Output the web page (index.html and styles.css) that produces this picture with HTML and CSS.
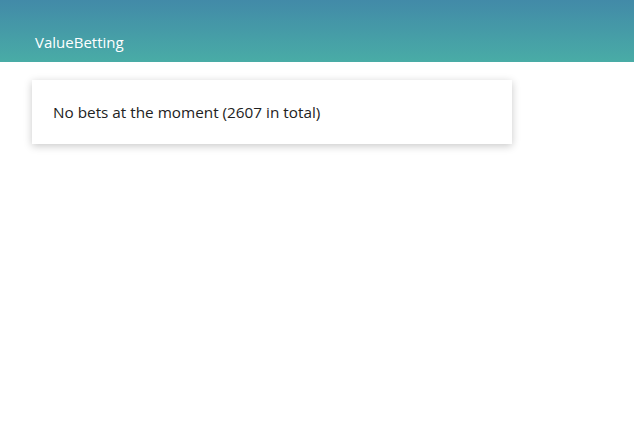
FILE: index.html
```html
<!DOCTYPE html>
<html lang="en">
<head>
    <meta charset="UTF-8">
    <meta name="viewport" content="width=device-width, initial-scale=1.0">
    <title>ValueBetting</title>
    <link rel="stylesheet" href="styles.css">
</head>
<body>

    <header class="topbar">
        <span class="brand">ValueBetting</span>
    </header>

    <main class="content">
        <div class="card">No bets at the moment (2607 in total)</div>
    </main>

</body>
</html>
```

FILE: styles.css
```css
body {
    margin: 0;
    font-family: "Open Sans", "Noto Sans", sans-serif;
    background-color: #fff;
    color: #222;
}
.topbar {
    height: 62px;
    box-sizing: border-box;
    padding: 31px 35px 0;
    background: linear-gradient(to bottom, #428aa8, #49aca6);
}
.brand {
    color: #fff;
    font-size: 15px;
    line-height: 20px;
}
.content {
    padding: 18px 32px;
}
.card {
    width: 480px;
    box-sizing: border-box;
    padding: 21px 21px;
    font-size: 15.3px;
    line-height: 22px;
    background: #fff;
    box-shadow: 0 2px 8px rgba(0,0,0,0.22);
}
```
